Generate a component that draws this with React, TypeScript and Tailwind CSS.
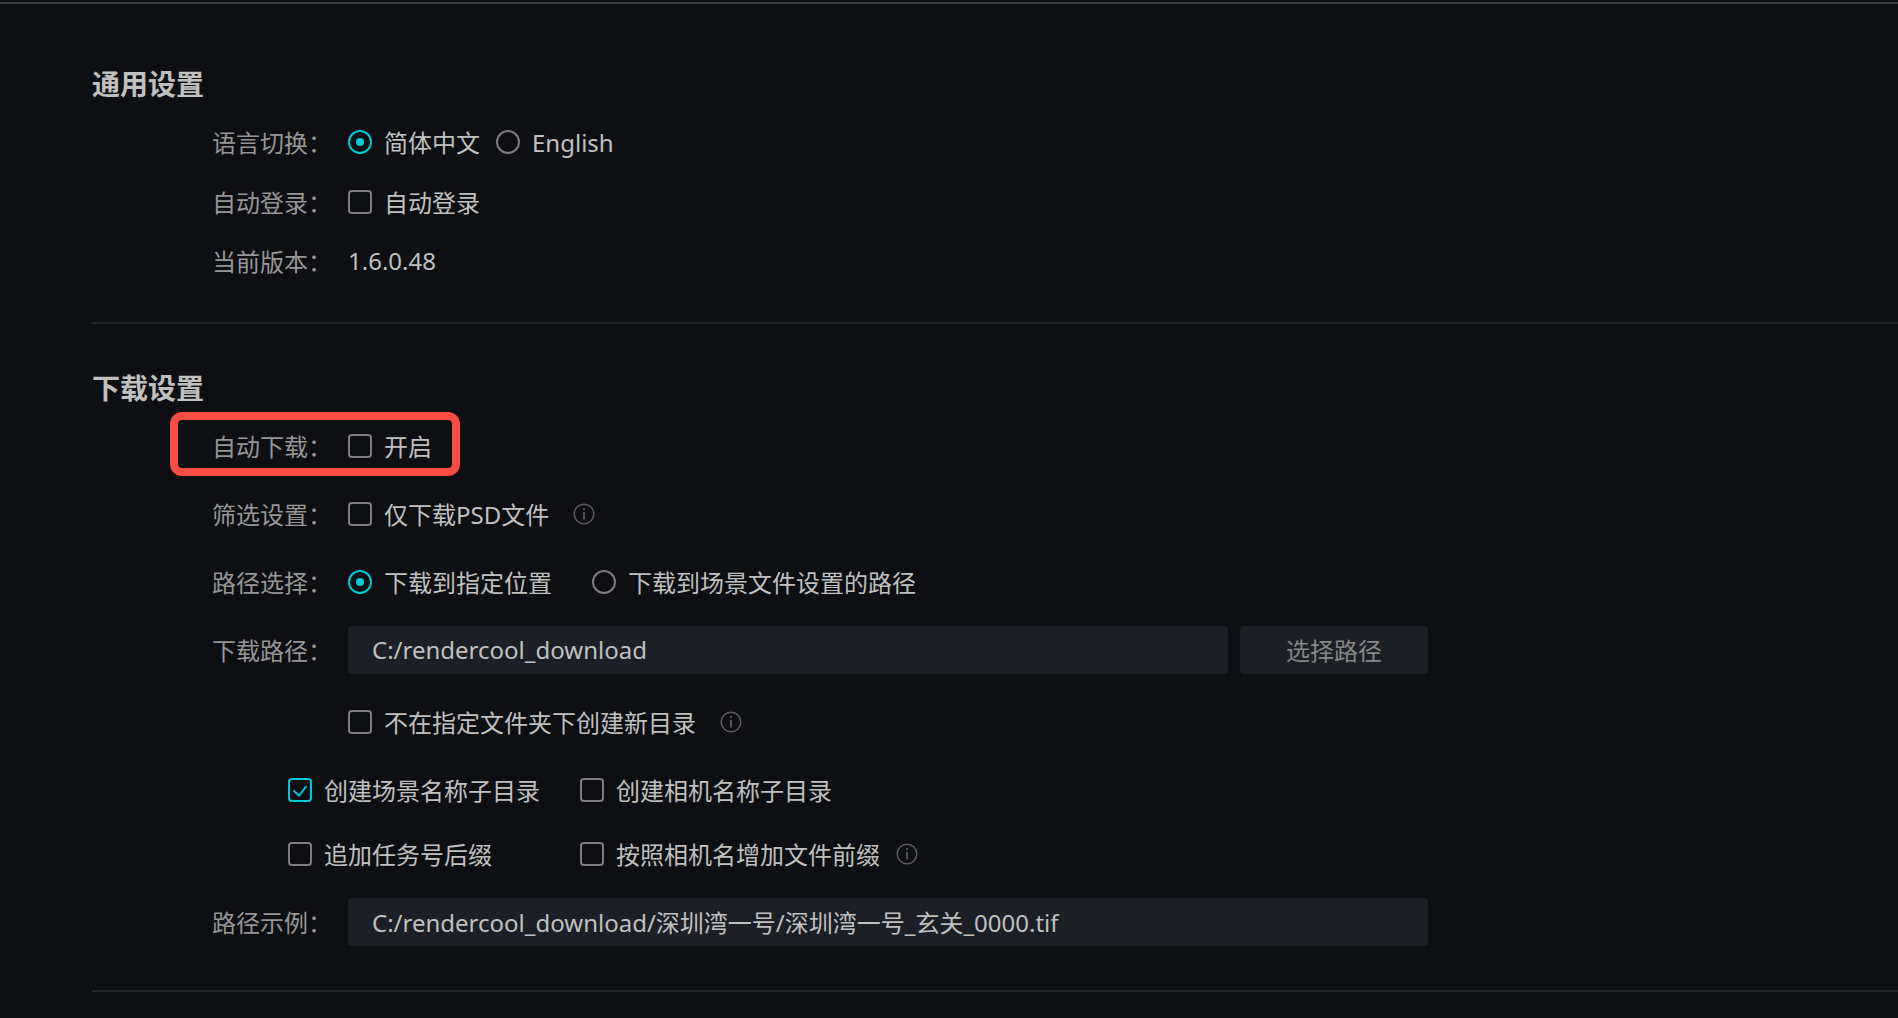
import { useState, type ReactNode } from "react";

function Radio({ name, label, defaultChecked }: { name: string; label: string; defaultChecked?: boolean }) {
  return (
    <label className="flex items-center gap-3">
      <input
        type="radio"
        name={name}
        defaultChecked={defaultChecked}
        className="grid size-6 shrink-0 appearance-none place-items-center rounded-full border-2 border-[#7d7d7e] before:size-2 before:rounded-full checked:border-[#00c8d7] checked:before:bg-[#00c8d7]"
      />
      <span className="pt-0.5">{label}</span>
    </label>
  );
}

function Check({ label, defaultChecked }: { label: string; defaultChecked?: boolean }) {
  return (
    <label className="flex items-center gap-3">
      <span className="grid size-6 shrink-0 place-items-center">
        <input
          type="checkbox"
          defaultChecked={defaultChecked}
          className="peer col-start-1 row-start-1 size-6 appearance-none rounded border-2 border-[#7d7d7e] checked:border-[#00c8d7]"
        />
        <svg
          viewBox="0 0 24 24"
          className="pointer-events-none invisible col-start-1 row-start-1 size-6 fill-none stroke-[#00c8d7] stroke-2 peer-checked:visible"
        >
          <path d="M5.5 12.5 L11 17.5 L18.5 8" />
        </svg>
      </span>
      <span className="pt-0.5">{label}</span>
    </label>
  );
}

function Info() {
  return (
    <svg viewBox="0 0 22 22" className="size-[22px] shrink-0 fill-none stroke-[#58595f]" role="img" aria-label="说明">
      <circle cx="11" cy="11" r="9.8" strokeWidth="1.5" />
      <path d="M11 9 V16.5 M11 5 V7" strokeWidth="1.8" />
    </svg>
  );
}

function Row({ label, size = "h-[68px]", children }: { label: string; size?: string; children: ReactNode }) {
  return (
    <div className={`flex items-center gap-4 ${size}`}>
      <span className="w-[120px] shrink-0 pt-0.5 text-[#969696]">{label}</span>
      {children}
    </div>
  );
}

export default function App() {
  const [path, setPath] = useState("C:/rendercool_download");
  return (
    <main className="min-h-screen bg-[#0e0f13] pt-0.5 font-['Noto_Sans','Noto_Sans_CJK_SC',sans-serif] text-2xl whitespace-nowrap text-[#c0c0c0]">
      <div className="h-0.5 bg-[#3a3c40]" />
      <div className="pl-[92px]">
        <section className="border-b-2 border-[#252627] pt-[62px] pb-8">
          <h2 className="mb-2.5 text-[28px] leading-9 font-bold">通用设置</h2>
          <div className="pl-[120px]">
            <Row label="语言切换：" size="h-15">
              <div className="flex gap-4">
                <Radio name="language" label="简体中文" defaultChecked />
                <Radio name="language" label="English" />
              </div>
            </Row>
            <Row label="自动登录：" size="h-15">
              <Check label="自动登录" />
            </Row>
            <Row label="当前版本：" size="h-[58px]">
              <span>1.6.0.48</span>
            </Row>
          </div>
        </section>

        <section className="border-b-2 border-[#252627] pt-[46px] pb-[34px]">
          <h2 className="mb-1.5 text-[28px] leading-9 font-bold">下载设置</h2>
          <div className="pl-[120px]">
            <div className="relative">
              <Row label="自动下载：">
                <Check label="开启" />
              </Row>
              <div className="pointer-events-none absolute top-0 -left-[42px] h-16 w-[290px] rounded-xl border-8 border-[#f84c46]" />
            </div>
            <Row label="筛选设置：">
              <div className="flex items-center gap-6">
                <Check label="仅下载PSD文件" />
                <Info />
              </div>
            </Row>
            <Row label="路径选择：">
              <div className="flex gap-10">
                <Radio name="target" label="下载到指定位置" defaultChecked />
                <Radio name="target" label="下载到场景文件设置的路径" />
              </div>
            </Row>
            <Row label="下载路径：">
              <div className="flex max-w-[1080px] flex-1 gap-3">
                <input
                  type="text"
                  aria-label="下载路径"
                  value={path}
                  onChange={(e) => setPath(e.target.value)}
                  className="h-12 min-w-0 flex-1 rounded bg-[#1c1f26] px-6 pb-0.5 outline-none"
                />
                <button type="button" className="h-12 w-[188px] rounded bg-[#1c1f26] pt-0.5 text-[#868686]">
                  选择路径
                </button>
              </div>
            </Row>
            <div className="mt-1 flex h-[68px] items-center gap-6 pl-[136px]">
              <Check label="不在指定文件夹下创建新目录" />
              <Info />
            </div>
            <div className="mb-1 grid grid-cols-[292px_1fr] grid-rows-[68px_60px] items-center pl-[76px]">
              <Check label="创建场景名称子目录" defaultChecked />
              <Check label="创建相机名称子目录" />
              <Check label="追加任务号后缀" />
              <div className="flex items-center gap-4">
                <Check label="按照相机名增加文件前缀" />
                <Info />
              </div>
            </div>
            <Row label="路径示例：">
              <input
                type="text"
                readOnly
                aria-label="路径示例"
                value="C:/rendercool_download/深圳湾一号/深圳湾一号_玄关_0000.tif"
                className="h-12 max-w-[1080px] min-w-0 flex-1 rounded bg-[#1c1f26] px-6 pb-0.5 outline-none"
              />
            </Row>
          </div>
        </section>
      </div>
    </main>
  );
}
